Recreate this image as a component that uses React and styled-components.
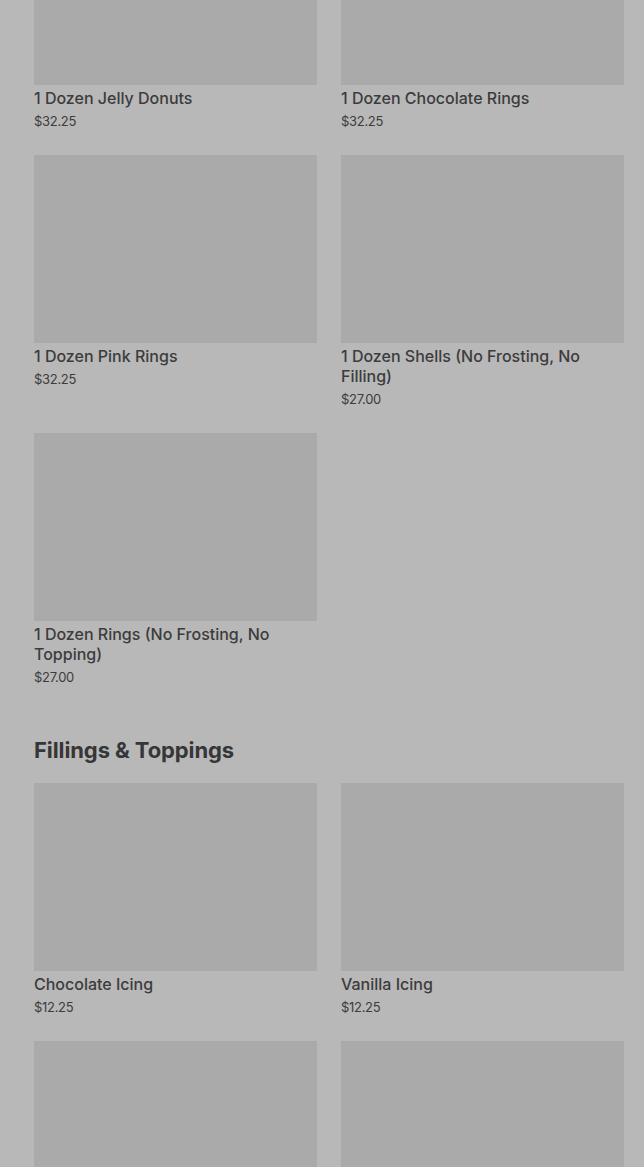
import React from 'react';
import styled, { createGlobalStyle } from 'styled-components';

const GlobalStyle = createGlobalStyle`
  html, body {
    margin: 0;
    padding: 0;
    background: #b8b8b8;
  }
  body {
    font-family: Inter, "Noto Sans", sans-serif;
    color: #3a3a3a;
  }
`;

const Viewport = styled.div`
  height: 1167px;
  overflow: hidden;
  background: #b8b8b8;
`;

// page is scrolled; the first row of cards starts above the fold
const Content = styled.main`
  margin-top: -103px;
  padding: 0 20px 0 34px;
`;

const Section = styled.section`
  & + & {
    margin-top: 50px;
  }
`;

const SectionTitle = styled.h2`
  margin: 0 0 19px;
  font-size: 22px;
  line-height: 28px;
  font-weight: 700;
  letter-spacing: -0.1px;
  color: #363636;
`;

const Grid = styled.div`
  display: grid;
  grid-template-columns: 1fr 1fr;
  column-gap: 24px;
  row-gap: 25px;
  align-items: start;
`;

const Card = styled.div`
  display: flex;
  flex-direction: column;
`;

const Thumb = styled.div`
  height: 188px;
  background: #aaaaaa;
`;

const Name = styled.div`
  margin-top: 3px;
  font-size: 16px;
  line-height: 20px;
  font-weight: 500;
  color: #3c3c3c;
`;

const Price = styled.div`
  margin-top: 4px;
  font-size: 13px;
  line-height: 18px;
  font-weight: 400;
  letter-spacing: -0.3px;
  color: #3c3c3c;
`;

const sections = [
  {
    title: null,
    items: [
      { name: '1 Dozen Jelly Donuts', price: '$32.25' },
      { name: '1 Dozen Chocolate Rings', price: '$32.25' },
      { name: '1 Dozen Pink Rings', price: '$32.25' },
      { name: '1 Dozen Shells (No Frosting, No Filling)', price: '$27.00' },
      { name: '1 Dozen Rings (No Frosting, No Topping)', price: '$27.00' },
    ],
  },
  {
    title: 'Fillings & Toppings',
    items: [
      { name: 'Chocolate Icing', price: '$12.25' },
      { name: 'Vanilla Icing', price: '$12.25' },
      { name: 'Strawberry Icing', price: '$12.25' },
      { name: 'Raspberry Filling', price: '$12.25' },
    ],
  },
];

const App = () => {
  return (
    <Viewport>
      <GlobalStyle />
      <Content>
        {sections.map((s, i) => (
          <Section key={i}>
            {s.title && <SectionTitle>{s.title}</SectionTitle>}
            <Grid>
              {s.items.map((item) => (
                <Card key={item.name}>
                  <Thumb />
                  <Name>{item.name}</Name>
                  <Price>{item.price}</Price>
                </Card>
              ))}
            </Grid>
          </Section>
        ))}
      </Content>
    </Viewport>
  );
};

export default App;
